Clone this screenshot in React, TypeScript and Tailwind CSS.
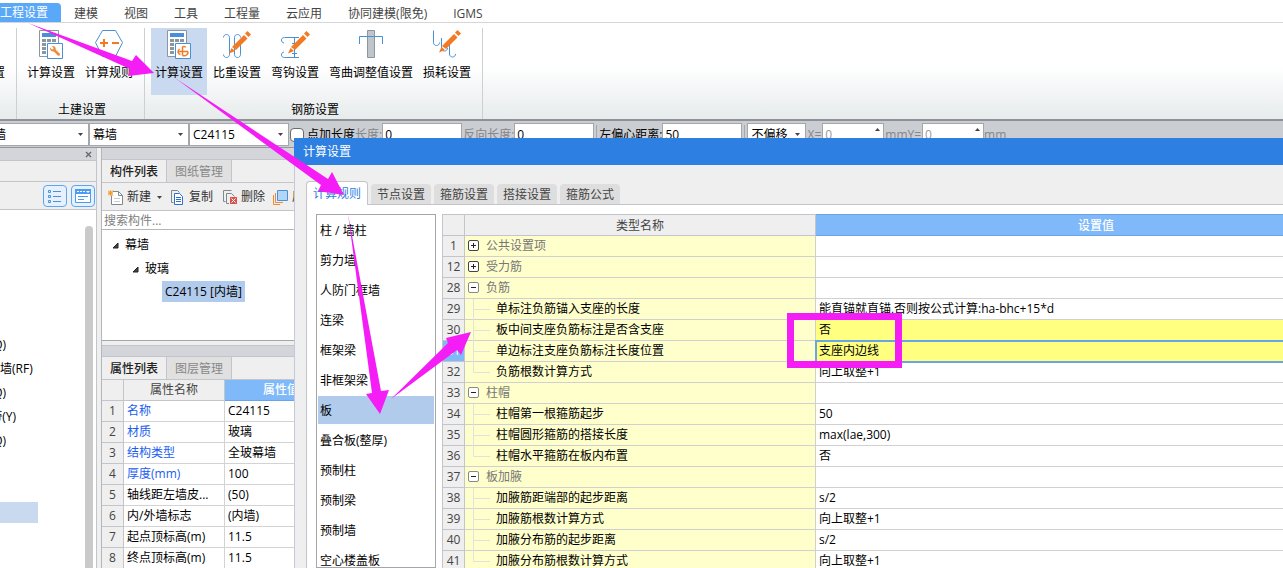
import * as React from "react"
import { clsx } from "clsx"

const MENU = ["建模", "视图", "工具", "工程量", "云应用", "协同建模(限免)", "IGMS"]

const PROPERTIES = [
  { name: "名称", value: "C24115", key: true },
  { name: "材质", value: "玻璃", key: true },
  { name: "结构类型", value: "全玻幕墙", key: true },
  { name: "厚度(mm)", value: "100", key: true },
  { name: "轴线距左墙皮...", value: "(50)" },
  { name: "内/外墙标志", value: "(内墙)" },
  { name: "起点顶标高(m)", value: "11.5" },
  { name: "终点顶标高(m)", value: "11.5" },
]

const DIALOG_TABS = ["计算规则", "节点设置", "箍筋设置", "搭接设置", "箍筋公式"]

const CATEGORIES = [
  "柱 / 墙柱",
  "剪力墙",
  "人防门框墙",
  "连梁",
  "框架梁",
  "非框架梁",
  "板",
  "叠合板(整厚)",
  "预制柱",
  "预制梁",
  "预制墙",
  "空心楼盖板",
]

type Rule = {
  no: number
  name: string
  value?: string
  group?: "open" | "closed"
  last?: boolean
  changed?: boolean
  current?: boolean
}

const RULES: Rule[] = [
  { no: 1, name: "公共设置项", group: "closed" },
  { no: 12, name: "受力筋", group: "closed" },
  { no: 28, name: "负筋", group: "open" },
  { no: 29, name: "单标注负筋锚入支座的长度", value: "能直锚就直锚,否则按公式计算:ha-bhc+15*d" },
  { no: 30, name: "板中间支座负筋标注是否含支座", value: "否", changed: true },
  { no: 31, name: "单边标注支座负筋标注长度位置", value: "支座内边线", changed: true, current: true },
  { no: 32, name: "负筋根数计算方式", value: "向上取整+1", last: true },
  { no: 33, name: "柱帽", group: "open" },
  { no: 34, name: "柱帽第一根箍筋起步", value: "50" },
  { no: 35, name: "柱帽圆形箍筋的搭接长度", value: "max(lae,300)" },
  { no: 36, name: "柱帽水平箍筋在板内布置", value: "否", last: true },
  { no: 37, name: "板加腋", group: "open" },
  { no: 38, name: "加腋筋距端部的起步距离", value: "s/2" },
  { no: 39, name: "加腋筋根数计算方式", value: "向上取整+1" },
  { no: 40, name: "加腋分布筋的起步距离", value: "s/2" },
  { no: 41, name: "加腋分布筋根数计算方式", value: "向上取整+1", last: true },
]

/* ---------- Icons ---------- */

function Calculator({ children }: { children: React.ReactNode }) {
  return (
    <svg width="30" height="30" viewBox="0 0 30 30" fill="none">
      <path d="M3.500 1.500h19v26h-19z" fill="#fff" stroke="#8a979e" />
      <path d="M6 4h14v4H6z" fill="#4a90d9" />
      <path
        d="M6 10h4v3H6zM11 10h4v3h-4zM16 10h4v3h-4zM6 14h4v3H6zM6 18h4v3H6zM6 22h4v3H6z"
        fill="#8a979e"
      />
      <path d="M11.500 14.500h15v15h-15z" fill="#fff" stroke="#4a90d9" />
      {children}
    </svg>
  )
}

function CalcWrenchIcon() {
  return (
    <Calculator>
      <path
        d="M14 18.500c-.4 2.600 1.400 4.400 3.900 3.900l3.900 4.200c.9.900 3-.9 2.100-1.900l-4.200-3.900c.5-2.500-1.500-4.300-3.800-3.700l1.900 2.100-1.700 1.600z"
        fill="#f08a33"
      />
    </Calculator>
  )
}

function CalcHookIcon() {
  return (
    <Calculator>
      <path
        d="M18.500 26.500V18.500c0-1.500 3-1.500 3 0M14 22.500h10M15.500 20c-2.500 2-1.500 5 1 5.500M18.500 26.500c3 1 6-1 5.500-4"
        stroke="#f27a24"
        strokeWidth="1.500"
      />
    </Calculator>
  )
}

function HexagonIcon() {
  return (
    <svg width="30" height="30" viewBox="0 0 30 30" fill="none">
      <path d="M8.500 1.500h13l7 12-7 14h-13l-7-14z" stroke="#4a90d9" />
      <path d="M6 14h8M10 10v8M18 14h7" stroke="#f27a24" strokeWidth="2" />
    </svg>
  )
}

function Pencil() {
  return (
    <g fill="#f27a24">
      <path d="M11 20L23 8l3.500 3.500L15 23z" />
      <path d="M24 6.500l2.500-2.500L30 7.500 27.500 10z" />
      <path d="M10.500 21l3.500 3-6 2.500z" />
    </g>
  )
}

function RatioIcon() {
  return (
    <svg width="30" height="30" viewBox="0 0 30 30" fill="none">
      <path
        d="M1.500 8.500c0-4 6-4 6 0v17c0 4-6 4-6 0M18.500 8.500c0-4-6-4-6 0v17c0 4 6 4 6 0V12"
        stroke="#4a90d9"
      />
      <g transform="translate(-1 -2)"><Pencil /></g>
    </svg>
  )
}

function HookIcon() {
  return (
    <svg width="30" height="30" viewBox="0 0 30 30" fill="none">
      <path
        d="M19 8.500H4.500c-4 0-4 5-.5 5.500M19 28.500H4.500c-4 0-4-5-.5-5.500M14.500 8.500v20M12 14.500h5M12 24.500h5"
        stroke="#4a90d9"
      />
      <g transform="translate(0 -2)"><Pencil /></g>
    </svg>
  )
}

function BendIcon() {
  return (
    <svg width="30" height="30" viewBox="0 0 30 30" fill="none">
      <path d="M11.500 1.500h7v27h-7z" fill="#bfc5ca" stroke="#8a979e" />
      <path d="M3.500 15V7.500h23V15" stroke="#4a90d9" />
    </svg>
  )
}

function LossIcon() {
  return (
    <svg width="30" height="30" viewBox="0 0 30 30" fill="none">
      <path
        d="M1.500 1.500v12c0 4 6 4 6 0M9.500 9v10c0 4 6 4 6 0M17.500 13v12c0 4 6 4 6 0"
        stroke="#4a90d9"
      />
      <g transform="translate(-1 -3)"><Pencil /></g>
    </svg>
  )
}

function ListViewIcon() {
  return (
    <svg width="14" height="14" viewBox="0 0 14 14" fill="none" stroke="#4a90d9">
      <path d="M.5 1.500h2v2h-2zM.5 6.500h2v2h-2zM.5 11.500h2v2h-2zM5 2.500h8M5 7.500h8M5 12.500h8" />
    </svg>
  )
}

function FormViewIcon() {
  return (
    <svg width="16" height="14" viewBox="0 0 16 14" fill="none">
      <path d="M.5.5h15v13H.5z" fill="#fff" stroke="#4a9cf0" />
      <path d="M0 0h16v5H0z" fill="#4a9cf0" />
      <path d="M2 2.500h2M5 2.500h2M8 2.500h2" stroke="#fff" />
      <path d="M11 2h4l-2 2z" fill="#fff" />
      <path d="M3 7.500h10M3 10.500h6" stroke="#4a9cf0" />
    </svg>
  )
}

function NewIcon() {
  return (
    <svg width="15" height="15" viewBox="0 0 15 15" fill="none">
      <path d="M3.500 1.500h7l4 4v9h-11z" fill="#fff" stroke="#7d8a92" />
      <path d="M10.500 1.500v4h4" stroke="#7d8a92" />
      <path d="M6 8.500h6M6 11.500h6" stroke="#c5cacd" />
      <path d="M0 .5h5v5H0z" fill="#fbe3b8" />
      <path d="M0 .5l5 5M5 .5l-5 5M2.500.5v5M0 3h5" stroke="#f0941e" />
    </svg>
  )
}

function CopyIcon() {
  return (
    <svg width="13" height="15" viewBox="0 0 13 15" fill="none">
      <path d="M2.500 12.500h-2V.5h6l2 2" stroke="#7d8a92" />
      <path d="M3.500 3.500h5l3 3v8h-8z" fill="#fff" stroke="#2d72c8" />
      <path d="M5 7.500h5M5 9.500h5M5 11.500h5" stroke="#2d72c8" />
    </svg>
  )
}

function DeleteIcon() {
  return (
    <svg width="15" height="15" viewBox="0 0 15 15" fill="none">
      <path d="M2.500 11.500h-2V.5h8M6 13.500H3.500v-10h5l3 3" stroke="#7d8a92" />
      <path d="M7 7h7v7H7z" fill="#d9534f" />
      <path d="M8.500 8.500l4 4M12.500 8.500l-4 4" stroke="#fff" />
    </svg>
  )
}

function LayersIcon() {
  return (
    <svg width="15" height="16" viewBox="0 0 15 16" fill="none">
      <path d="M.5 6v9.500H7" stroke="#f08a33" />
      <path d="M2.500 4v9.500H10" stroke="#f08a33" />
      <path d="M4.500 1.500h10v10h-10z" fill="#b3d5fa" stroke="#4a90d9" />
    </svg>
  )
}

function Caret({ up, className }: { up?: boolean; className?: string }) {
  return (
    <svg width="5" height="3" viewBox="0 0 5 3" className={className}>
      <path d={up ? "M0 3h5L2.500 0z" : "M0 0h5L2.500 3z"} fill="#444" />
    </svg>
  )
}

/* ---------- Ribbon ---------- */

function RibbonButton({
  label,
  icon,
  active,
}: {
  label: string
  icon?: React.ReactNode
  active?: boolean
}) {
  return (
    <button
      type="button"
      className={clsx(
        "flex h-[67px] flex-col items-center px-1 pt-px whitespace-nowrap",
        active && "bg-[#c9d9f0]"
      )}
    >
      <span className="h-[34px]">{icon}</span>
      <span className="h-5 leading-5">{label}</span>
    </button>
  )
}

function RibbonGroup({ title, children }: { title: string; children: React.ReactNode }) {
  return (
    <section className="flex flex-col justify-between border-r border-[#cdd0d3] pr-[7px] pl-1.5">
      <div className="flex gap-0.5">{children}</div>
      <h2 className="pl-1 text-center leading-[18px]">{title}</h2>
    </section>
  )
}

function Ribbon() {
  return (
    <header className="shrink-0">
      <nav className="flex h-[23px] items-end border-b border-[#d6d6d6] bg-white text-[#444]">
        <button type="button" className="h-[19px] rounded-tr-sm bg-[#5aa8f8] pr-[13px] text-white">
          工程设置
        </button>
        {MENU.map((item) => (
          <button key={item} type="button" className="h-[19px] px-[13px] pt-0.5 whitespace-nowrap">
            {item}
          </button>
        ))}
      </nav>
      <div className="flex h-[98px] border-b-2 border-[#8e9197] bg-linear-to-b from-white from-45% to-[#e7ebec] pt-[5px]">
        <div className="flex w-[17px] justify-end overflow-hidden border-r border-[#cdd0d3] pt-[35px] pr-[11px] leading-5">
          置
        </div>
        <RibbonGroup title="土建设置">
          <RibbonButton label="计算设置" icon={<CalcWrenchIcon />} />
          <RibbonButton label="计算规则" icon={<HexagonIcon />} />
        </RibbonGroup>
        <RibbonGroup title="钢筋设置">
          <RibbonButton label="计算设置" icon={<CalcHookIcon />} active />
          <RibbonButton label="比重设置" icon={<RatioIcon />} />
          <RibbonButton label="弯钩设置" icon={<HookIcon />} />
          <RibbonButton label="弯曲调整值设置" icon={<BendIcon />} />
          <RibbonButton label="损耗设置" icon={<LossIcon />} />
        </RibbonGroup>
      </div>
    </header>
  )
}

/* ---------- Options bar ---------- */

function Combo({ label, value, className }: { label: string; value: string; className?: string }) {
  return (
    <div className={clsx("relative h-[23px] shrink-0 border border-[#a6a6a8] bg-white", className)}>
      <select
        aria-label={label}
        defaultValue={value}
        className="h-full w-full appearance-none bg-transparent pl-[3px] text-black"
      >
        <option>{value}</option>
      </select>
      <Caret className="pointer-events-none absolute top-[9px] right-[5px]" />
    </div>
  )
}

function Field({
  label,
  value,
  wide,
  muted,
  spin,
}: {
  label: string
  value: string
  wide?: boolean
  muted?: boolean
  spin?: boolean
}) {
  return (
    <label className={clsx("flex h-[23px] shrink-0 items-center", muted && "text-[#85878b]")}>
      <span className={clsx("whitespace-nowrap", spin && "px-px")}>{label}</span>
      <span className="relative">
        <input
          type="text"
          defaultValue={value}
          className={clsx(
            "block h-[23px] border border-[#a6a6a8] bg-white pl-[2px]",
            wide ? "w-[80px]" : "w-[62px]",
            spin ? "text-[#999]" : "text-black"
          )}
        />
        {spin && <Caret up className="absolute top-[5px] right-1" />}
      </span>
    </label>
  )
}

function OptionsBar() {
  return (
    <div className="flex h-[27px] shrink-0 items-start overflow-hidden border-b border-[#94979d] bg-[#cacdd2] pt-0.5">
      <div className="flex w-[89px] justify-end overflow-hidden">
        <Combo label="构件大类" value="墙" className="w-[99px]" />
      </div>
      <Combo label="构件类型" value="幕墙" className="w-[100px]" />
      <Combo label="构件" value="C24115" className="w-[100px]" />
      <label className="ml-px flex h-[23px] shrink-0 items-center gap-[3px]">
        <input type="checkbox" className="size-[14px] appearance-none rounded-sm border border-[#6b6b6b] bg-white" />
        点加长度
      </label>
      <Field label="长度:" value="0" wide muted />
      <div className="w-px" />
      <Field label="反向长度:" value="0" wide muted />
      <div className="mx-0.5 mt-0.5 h-5 w-px bg-[#a6a8ad]" />
      <Field label="左偏心距离:" value="50" wide />
      <div className="mx-0.5 mt-0.5 h-5 w-px bg-[#a6a8ad]" />
      <Combo label="偏移方式" value="不偏移" className="w-[59px]" />
      <Field label="X=" value="0" muted spin />
      <Field label="mmY=" value="0" muted spin />
      <span className="leading-[23px] text-[#85878b]">mm</span>
    </div>
  )
}

/* ---------- Docked panels ---------- */

function NavigationPanel() {
  return (
    <aside className="flex w-[97px] shrink-0 flex-col border-r border-[#c3c5ca] bg-white">
      <div className="flex h-3 items-center justify-end bg-[#d3d5da] pr-1">
        <button type="button" aria-label="关闭">
          <svg width="7" height="7" viewBox="0 0 7 7" fill="none" stroke="#666">
            <path d="M1 1l5 5M6 1L1 6" strokeWidth="1.300" />
          </svg>
        </button>
      </div>
      <div className="h-[22px] border-y border-[#c3c5ca] bg-[#efefef]" />
      <div className="flex h-[28px] items-center justify-end gap-1 border-b border-[#c3c5ca] bg-[#efefef] pr-px">
        <button
          type="button"
          aria-label="列表视图"
          className="flex h-[22px] w-6 items-center justify-center rounded-sm border border-[#58a6f5] bg-[#e6f1fd]"
        >
          <ListViewIcon />
        </button>
        <button
          type="button"
          aria-label="表单视图"
          className="flex h-[22px] w-6 items-center justify-center rounded-sm border border-[#58a6f5] bg-[#e6f1fd]"
        >
          <FormViewIcon />
        </button>
      </div>
      <div className="flex min-h-0 flex-1 justify-between pr-[3px]">
        <ul className="pt-[123px] leading-6 whitespace-nowrap">
          <li className="flex w-[6px] justify-end overflow-hidden">Q)</li>
          <li>墙(RF)</li>
          <li className="flex w-[6px] justify-end overflow-hidden">Q)</li>
          <li className="flex w-[16px] justify-end overflow-hidden">带(Y)</li>
          <li className="flex w-[6px] justify-end overflow-hidden">Q)</li>
          <li className="mt-[49px] h-[21px] w-[38px] bg-[#c9d9f0]" />
        </ul>
        <div className="mt-4 w-2 rounded-t-full bg-[#cacaca]" />
      </div>
    </aside>
  )
}

function PanelTabs({ active, other }: { active: string; other: string }) {
  return (
    <div className="flex h-[23px] shrink-0 border-b border-[#c3c5ca] bg-[#efefef]">
      <button type="button" className="w-[65px] border-r border-[#c3c5ca] pt-0.5 font-medium text-[#222]">
        {active}
      </button>
      <button type="button" className="w-[65px] border-r border-[#c3c5ca] bg-[#e0e0e0] pt-0.5 text-[#888]">
        {other}
      </button>
    </div>
  )
}

function ComponentPanel() {
  return (
    <div className="ml-1 flex w-[300px] shrink-0 flex-col border-l border-[#b4b6ba]">
      <div className="h-3 shrink-0 border-b border-[#c3c5ca] bg-[#d3d5da]" />
      <PanelTabs active="构件列表" other="图纸管理" />
      <div className="flex h-[28px] shrink-0 items-center border-b border-[#c3c5ca] bg-[#efefef] pt-px pl-1.5 text-[#333]">
        <button type="button" className="flex items-center gap-1">
          <NewIcon />
          新建
          <Caret className="ml-0.5" />
        </button>
        <button type="button" className="ml-[9px] flex items-center gap-[5px]">
          <CopyIcon />
          复制
        </button>
        <button type="button" className="ml-2.5 flex items-center gap-[3px]">
          <DeleteIcon />
          删除
        </button>
        <button type="button" className="ml-2 flex items-center gap-1 whitespace-nowrap">
          <LayersIcon />
          层间复制
        </button>
      </div>
      <input
        type="search"
        aria-label="搜索构件"
        placeholder="搜索构件..."
        className="h-[19px] shrink-0 border-b border-[#b4b6ba] bg-white pl-0.5 placeholder:text-[#808080]"
      />
      <ul className="h-[111px] shrink-0 border-b border-[#a6a6a8] bg-white pt-[3px] leading-6">
        <li className="flex items-center gap-1.5 pl-2.5">
          <TreeArrow />
          幕墙
        </li>
        <li className="flex items-center gap-1.5 pl-[30px]">
          <TreeArrow />
          玻璃
        </li>
        <li className="flex items-center pl-[60px]">
          <span className="h-[21px] bg-[#b1cbed] px-[3px] leading-[21px]">C24115 [内墙]</span>
        </li>
      </ul>
      <div className="mt-1 h-3 shrink-0 border-y border-[#c3c5ca] bg-[#d3d5da]" />
      <PanelTabs active="属性列表" other="图层管理" />
      <table className="w-full table-fixed border-separate border-spacing-0 bg-white">
        <colgroup>
          <col className="w-[22px]" />
          <col className="w-[101px]" />
          <col />
        </colgroup>
        <thead>
          <tr className="h-[21px] bg-[#efefef] text-[#444]">
            <th className="border-r border-b border-[#c3c5ca]" />
            <th className="border-r border-b border-[#c3c5ca] p-0 font-normal">属性名称</th>
            <th className="border-b border-[#68a5e8] bg-[#80b9fa] py-0 pr-[64px] font-medium whitespace-nowrap text-white">
              属性值
            </th>
          </tr>
        </thead>
        <tbody>
          {PROPERTIES.map((p, i) => (
            <tr key={p.name} className="h-[21px]">
              <td className="border-r border-b border-[#c3c5ca] bg-[#efefef] p-0 text-center text-[#444]">
                {i + 1}
              </td>
              <td
                className={clsx(
                  "border-r border-b border-[#d3d3d3] py-0 pl-[3px] whitespace-nowrap",
                  p.key && "text-[#1a5df0]"
                )}
              >
                {p.name}
              </td>
              <td className="border-b border-[#d3d3d3] py-0 pl-[3px]">{p.value}</td>
            </tr>
          ))}
        </tbody>
      </table>
    </div>
  )
}

function TreeArrow() {
  return (
    <svg width="7" height="7" viewBox="0 0 7 7">
      <path d="M6 1v5H1z" fill="#444" stroke="#222" />
    </svg>
  )
}

/* ---------- Calculation settings dialog ---------- */

function Toggle({ open }: { open: boolean }) {
  return (
    <button type="button" aria-label={open ? "收起" : "展开"} aria-expanded={open} className="mb-0.5 block size-[11px]">
      <svg width="11" height="11" viewBox="0 0 11 11" fill="none">
        <rect x=".5" y=".5" width="10" height="10" rx="1.500" fill="#fff" stroke={open ? "#888" : "#444"} />
        <path d={open ? "M3 5.500h5" : "M3 5.500h5M5.500 3v5"} stroke="#222" />
      </svg>
    </button>
  )
}

function TreeBranch({ last }: { last?: boolean }) {
  return (
    <svg width="17" height="21" viewBox="0 0 17 21" fill="none" stroke="#e2e2dc">
      <path d={last ? "M.5 0v10.500H17" : "M.5 0v21M.5 10.500H17"} />
    </svg>
  )
}

function RuleRow({ rule }: { rule: Rule }) {
  return (
    <tr className="h-[21px]">
      <td
        className={clsx(
          "border border-[#c3c5ca] p-0 text-center",
          rule.current ? "bg-[#80b9fa] text-white" : "bg-[#efefef] text-[#444]"
        )}
      >
        {rule.no}
      </td>
      <td className="border border-[#d0d0d0] bg-[#ffffcc] p-0">
        {rule.group ? (
          <div className="flex h-5 items-center gap-[7px] pl-[3px] text-[#777]">
            <Toggle open={rule.group === "open"} />
            {rule.name}
          </div>
        ) : (
          <div className="flex h-5 items-center gap-1.5 pl-2">
            <TreeBranch last={rule.last} />
            {rule.name}
          </div>
        )}
      </td>
      <td
        className={clsx(
          "border border-[#d0d0d0] py-0 pl-[3px]",
          rule.changed && "bg-[#ffff80]",
          rule.current && "outline-2 -outline-offset-1 outline-[#68a5e8]"
        )}
      >
        {rule.value}
      </td>
    </tr>
  )
}

function SettingsDialog() {
  return (
    <div
      role="dialog"
      aria-label="计算设置"
      className="absolute top-[138px] right-0 bottom-0 left-[294px] flex flex-col overflow-hidden bg-[#efefef]"
    >
      <h1 className="h-[27px] shrink-0 bg-[#2d7fe2] pl-[9px] leading-[27px] text-white">计算设置</h1>
      <div className="flex min-h-0 flex-1 flex-col border-l border-[#c3c9da] pt-4 pl-[11px]">
        <div role="tablist" className="flex h-6 shrink-0 items-end gap-[3px] border-b border-[#c3c5ca]">
          {DIALOG_TABS.map((tab, i) => (
            <button
              key={tab}
              type="button"
              role="tab"
              aria-selected={i === 0}
              className={clsx(
                "shrink-0 rounded-t",
                i === 0
                  ? "-mb-px h-6 w-[62px] border border-b-0 border-[#c3c5ca] bg-white pt-px text-[#2d7fe2]"
                  : "h-5 w-[60px] bg-[#dedede] pt-0.5 text-[#444]"
              )}
            >
              {tab}
            </button>
          ))}
        </div>
        <div className="flex min-h-0 flex-1 gap-1.5 border-l border-[#c3c5ca] bg-white pt-[9px] pl-[9px]">
          <ul className="flex w-[120px] shrink-0 flex-col gap-0.5 overflow-hidden border border-[#a6a6a8] px-px pt-px">
            {CATEGORIES.map((c) => (
              <li
                key={c}
                className={clsx("h-7 shrink-0 pl-0.5 leading-[30px]", c === "板" && "bg-[#b1cbed]")}
              >
                {c}
              </li>
            ))}
          </ul>
          <div className="min-w-0 flex-1 overflow-hidden">
            {/* value column runs on past the visible edge of the window */}
            <table className="w-[935px] table-fixed border-collapse">
              <colgroup>
                <col className="w-[22px]" />
                <col className="w-[351px]" />
                <col />
              </colgroup>
              <thead>
                <tr className="h-[21px] bg-[#efefef] text-[#444]">
                  <th className="border border-[#c3c5ca]" />
                  <th className="border border-[#c3c5ca] p-0 pt-px font-normal">类型名称</th>
                  <th className="border border-[#68a5e8] bg-[#80b9fa] p-0 pt-px font-medium text-white">设置值</th>
                </tr>
              </thead>
              <tbody>
                {RULES.map((rule) => (
                  <RuleRow key={rule.no} rule={rule} />
                ))}
              </tbody>
            </table>
          </div>
        </div>
      </div>
    </div>
  )
}

/* ---------- Walkthrough markings drawn over the window ---------- */

function Annotations() {
  return (
    <>
      <svg
        width="600"
        height="500"
        viewBox="0 0 600 500"
        fill="#f41df5"
        className="pointer-events-none absolute top-0 left-0"
      >
        <path d="M28 23L132 61l4-6 18 18-26 3 2-7z" />
        <path d="M175 78L328 179l4-7 12 23-26-4 3-6z" />
        <path d="M348 214L381 391l8-1-9 24-14-20 6-1z" />
        <path d="M391 399L448 343l-2-5 25-6-10 23-4-5z" />
      </svg>
      <div className="pointer-events-none absolute top-[313px] left-[787px] h-[55px] w-[115px] border-[7px] border-[#f41df5]" />
    </>
  )
}

export default function App() {
  return (
    <div className="relative flex h-screen flex-col overflow-hidden bg-[#efefef] font-['Open_Sans','Noto_Sans_CJK_SC',sans-serif] text-[12px] leading-4 text-black">
      <Ribbon />
      <OptionsBar />
      <main className="flex min-h-0 flex-1">
        <NavigationPanel />
        <ComponentPanel />
      </main>
      <SettingsDialog />
      <Annotations />
    </div>
  )
}
